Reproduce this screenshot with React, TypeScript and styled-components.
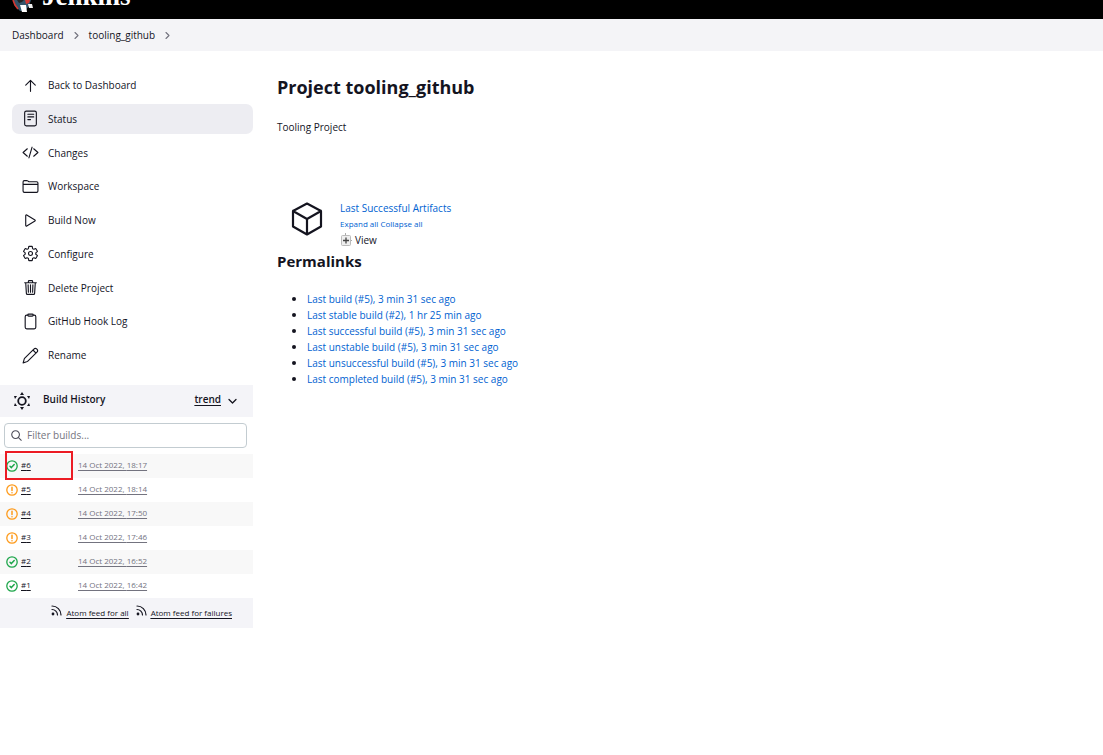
import React from 'react';
import styled, { createGlobalStyle, css } from 'styled-components';

const GlobalStyle = createGlobalStyle`
  * { box-sizing: border-box; }
  body {
    margin: 0;
    background: #fff;
    color: #14141f;
    font: 10px/16px "Open Sans", "Noto Sans", sans-serif;
  }
  a { color: inherit; }
  svg { display: block; flex: none; }
`;

const TopBar = styled.header`
  height: 19px;
  background: #000;
  overflow: hidden;
  display: flex;
  align-items: flex-end;
  padding-left: 11px;
`;

const Brand = styled.a`
  display: flex;
  align-items: flex-end;
  gap: 7px;
  color: #fff;
  text-decoration: none;
`;

const Wordmark = styled.span`
  font: bold 27px/28px "Liberation Serif", serif;
  margin-bottom: 9px;
`;

const Breadcrumbs = styled.nav`
  display: flex;
  align-items: center;
  gap: 8px;
  height: 32px;
  padding: 0 12px;
  background: #f4f4f7;
`;

const Crumb = styled.a`
  text-decoration: none;
`;

const Page = styled.div`
  display: grid;
  grid-template-columns: 253px minmax(0, 1fr);
  column-gap: 24px;
`;

const Side = styled.aside``;

const Tasks = styled.nav`
  display: flex;
  flex-direction: column;
  justify-content: space-between;
  min-height: 334px;
  padding: 19px 0 15px 12px;
`;

const Task = styled.a<{ $active?: boolean }>`
  display: flex;
  align-items: center;
  gap: 9px;
  height: 30px;
  padding: 0 10px;
  border-radius: 7px;
  text-decoration: none;
  background: ${(p) => (p.$active ? '#ededf2' : 'transparent')};
`;

const HistoryHead = styled.div`
  display: flex;
  align-items: center;
  height: 32px;
  padding: 0 16px 0 13px;
  background: #f4f4f8;
`;

const HistoryTitle = styled.h2`
  flex: 1;
  margin: 0 0 4px 12px;
  font-size: 10px;
  line-height: 16px;
  font-weight: 600;
`;

const Trend = styled.a`
  margin: 0 7px 4px 0;
  font-weight: 600;
  text-underline-offset: 2px;
`;

const Filter = styled.label`
  display: flex;
  align-items: center;
  gap: 5px;
  height: 25px;
  margin: 6px 6px 6px 4px;
  padding: 0 6px 1px;
  border: 1px solid #c3ccd1;
  border-radius: 4px;
`;

const FilterInput = styled.input`
  flex: 1;
  min-width: 0;
  border: 0;
  padding: 0;
  outline: 0;
  background: none;
  font: inherit;
  &::placeholder { color: #757580; opacity: 1; }
`;

const Builds = styled.table`
  width: 100%;
  border-collapse: collapse;
`;

const BuildRow = styled.tr`
  height: 24px;
  &:nth-child(odd) { background: #f8f8f8; }
`;

const NumberCell = styled.td`
  position: relative;
  width: 78px;
  padding: 0 0 0 6px;
`;

const Marker = styled.span`
  position: absolute;
  top: -3px;
  left: 5px;
  width: 68px;
  height: 29px;
  border: 2px solid #ec1c24;
`;

const BuildName = styled.span`
  display: flex;
  align-items: center;
  gap: 3px;
`;

const BuildLink = styled.a<{ $muted?: boolean }>`
  display: inline-block;
  padding-bottom: 2px;
  font-size: 8px;
  line-height: 14px;
  text-underline-offset: 2px;
  ${(p) => p.$muted && css`color: #73737f;`}
`;

const DateCell = styled.td`
  padding: 0 0 2px;
  line-height: 14px;
`;

const Feeds = styled.div`
  display: flex;
  justify-content: flex-end;
  align-items: center;
  gap: 7px;
  height: 30px;
  padding-right: 21px;
  background: #f4f4f8;
  font-size: 8px;
`;

const Feed = styled.a`
  display: flex;
  gap: 4px;
  text-underline-offset: 2px;
`;

const FeedText = styled.span`
  text-decoration: underline;
`;

const Main = styled.main`
  padding-top: 23px;
`;

const Title = styled.h1`
  margin: 0;
  font-size: 18px;
  line-height: 26px;
  font-weight: 700;
`;

const Description = styled.p`
  margin: 19px 0 65px;
`;

const Artifacts = styled.section`
  display: flex;
  align-items: flex-end;
  gap: 16px;
  padding-left: 14px;
`;

const Cube = styled.svg`
  align-self: center;
  margin-top: -10px;
`;

const ArtifactList = styled.div`
  display: flex;
  flex-direction: column;
`;

const BlueLink = styled.a`
  color: #0062d1;
  text-decoration: none;
`;

const TreeActions = styled.div`
  font-size: 8px;
`;

const TreeNode = styled.div`
  display: flex;
  align-items: center;
  gap: 3px;
`;

const Section = styled.h2`
  margin: 1px 0 18px;
  font-size: 15px;
  line-height: 24px;
  font-weight: 700;
`;

const Permalinks = styled.ul`
  margin: 0;
  padding-left: 30px;
  & > li::marker { font-size: 12px; }
`;

const stroke = { fill: 'none', stroke: '#14141f', strokeLinecap: 'round', strokeLinejoin: 'round' } as const;

const TaskIcon = ({ children }: { children: React.ReactNode }) => (
  <svg width="17" height="17" viewBox="0 0 512 512" {...stroke} strokeWidth="34" aria-hidden="true">{children}</svg>
);

const tasks: { label: string; active?: boolean; icon: React.ReactNode }[] = [
  { label: 'Back to Dashboard', icon: <path d="M112 244 256 100 400 244M256 120v312" /> },
  {
    label: 'Status', active: true,
    icon: <><rect x="80" y="32" width="352" height="448" rx="48" /><path d="M176 128h176M176 208h176M176 288h80" /></>,
  },
  { label: 'Changes', icon: <path d="M160 368 32 256l128-112M352 368l128-112-128-112M304 96l-96 320" /> },
  {
    label: 'Workspace',
    icon: <path d="M440 432H72a40 40 0 0 1-40-40V120a40 40 0 0 1 40-40h75.900a40 40 0 0 1 22.200 6.700l27.800 18.600a40 40 0 0 0 22.200 6.700H440a40 40 0 0 1 40 40v240a40 40 0 0 1-40 40zM32 192h448" />,
  },
  { label: 'Build Now', icon: <path d="M112 111v290c0 17.400 17 28.500 31 20.200l247-148.400c12.300-7.800 12.300-25.800 0-33.600L143 90.800c-14-8.300-31 2.800-31 20.200z" /> },
  {
    label: 'Configure',
    icon: <><circle cx="256" cy="256" r="60" /><path d="M416.390 256a154.340 154.340 0 0 1-1.530 20.790l45.210 35.460a10.810 10.810 0 0 1 2.450 13.750l-42.770 74a10.810 10.810 0 0 1-13.140 4.590l-44.900-18.080a16.110 16.110 0 0 0-15.170 1.750A164.480 164.480 0 0 1 325 400.800a15.940 15.940 0 0 0-8.820 12.140l-6.730 47.890a11.080 11.080 0 0 1-10.680 9.170h-85.540a11.110 11.110 0 0 1-10.690-8.870l-6.720-47.820a16.070 16.070 0 0 0-9-12.220 155.300 155.300 0 0 1-21.460-12.570 16 16 0 0 0-15.110-1.710l-44.890 18.070a10.810 10.810 0 0 1-13.140-4.580l-42.770-74a10.800 10.800 0 0 1 2.450-13.750l38.210-30a16.050 16.050 0 0 0 6-14.080c-.36-4.170-.58-8.330-.58-12.500s.21-8.270.58-12.350a16 16 0 0 0-6.070-13.940l-38.190-30A10.810 10.810 0 0 1 49.480 186l42.770-74a10.810 10.810 0 0 1 13.140-4.590l44.900 18.080a16.110 16.110 0 0 0 15.170-1.750A164.480 164.480 0 0 1 187 111.200a15.940 15.940 0 0 0 8.820-12.140l6.730-47.890A11.080 11.080 0 0 1 213.230 42h85.540a11.110 11.110 0 0 1 10.690 8.870l6.720 47.820a16.070 16.070 0 0 0 9 12.220 155.300 155.300 0 0 1 21.460 12.570 16 16 0 0 0 15.110 1.710l44.890-18.070a10.810 10.810 0 0 1 13.140 4.580l42.770 74a10.800 10.800 0 0 1-2.450 13.750l-38.210 30a16.050 16.050 0 0 0-6.050 14.080c.33 4.140.55 8.300.55 12.470z" /></>,
  },
  {
    label: 'Delete Project',
    icon: <path d="M112 112l20 320c1 18.500 14.400 32 32 32h184c17.700 0 30.900-13.500 32-32l20-320M80 112h352M192 112V72a24 24 0 0 1 24-24h80a24 24 0 0 1 24 24v40M256 176v224M184 176l8 224M328 176l-8 224" />,
  },
  {
    label: 'GitHub Hook Log',
    icon: <><path d="M336 64h32a48 48 0 0 1 48 48v320a48 48 0 0 1-48 48H144a48 48 0 0 1-48-48V112a48 48 0 0 1 48-48h32" /><rect x="176" y="32" width="160" height="64" rx="26" /></>,
  },
  { label: 'Rename', icon: <path d="M358 62 84 336c-12 12-20 34-26 58L34 478l84-24c24-6 46-14 58-26L450 154c22-22 28-56 4-84l-12-12c-28-24-62-18-84 4zM330 90l92 92" /> },
];

const Chevron = ({ down }: { down?: boolean }) => (
  <svg width="9" height="9" viewBox="0 0 9 9" {...stroke} stroke={down ? '#14141f' : '#73737f'} strokeWidth={down ? 1.3 : 1.1} aria-hidden="true">
    <path d={down ? 'M1 2.500l3.500 3.500L8 2.500' : 'M3 1.500l3 3L3 7.500'} />
  </svg>
);

const BuildIcon = ({ ok }: { ok: boolean }) => (
  <svg width="12" height="12" viewBox="0 0 12 12" fill="none" strokeLinecap="round" strokeLinejoin="round"
    stroke={ok ? '#1ea64b' : '#fe9a1a'} strokeWidth="1.300" role="img" aria-label={ok ? 'Success' : 'Unstable'}>
    <circle cx="6" cy="6" r="5.200" />
    {ok ? <path d="M4 6.200l1.400 1.400L8.200 4.600" strokeWidth="1.500" /> : <path d="M6 3.200v3.400M6 8.700v.1" strokeWidth="1.500" />}
  </svg>
);

const FeedIcon = () => (
  <svg width="11" height="11" viewBox="0 0 11 11" {...stroke} strokeWidth="1.200" aria-hidden="true">
    <path d="M1 1c5 0 9 4 9 9M1 4.500c3 0 5.500 2.500 5.500 5.500" />
    <circle cx="2" cy="9" r=".8" fill="#14141f" />
  </svg>
);

const builds = [
  { id: 6, time: '18:17', ok: true, marked: true },
  { id: 5, time: '18:14', ok: false },
  { id: 4, time: '17:50', ok: false },
  { id: 3, time: '17:46', ok: false },
  { id: 2, time: '16:52', ok: true },
  { id: 1, time: '16:42', ok: true },
];

const permalinks = [
  'Last build (#5), 3 min 31 sec ago',
  'Last stable build (#2), 1 hr 25 min ago',
  'Last successful build (#5), 3 min 31 sec ago',
  'Last unstable build (#5), 3 min 31 sec ago',
  'Last unsuccessful build (#5), 3 min 31 sec ago',
  'Last completed build (#5), 3 min 31 sec ago',
];

export default function App() {
  return (
    <>
      <GlobalStyle />
      <TopBar>
        <Brand href="#">
          <svg width="24" height="19" viewBox="0 0 24 19" aria-hidden="true">
            <path d="M2 0h18l-2 6-4 5H9L4 6z" fill="#33546a" />
            <path d="M2 0l2 5 3 4" stroke="#d33833" strokeWidth="1.600" fill="none" />
            <path d="M14 0h5l-1 3-3 1z" fill="#d33833" />
            <path d="M6 0h7l-2 2-3 1z" fill="#222" />
            <path d="M9 5h6l1 7h-5z" fill="#fff" />
            <path d="M17 4l4 0 1 4-4 0z" fill="#eee" />
          </svg>
          <Wordmark>Jenkins</Wordmark>
        </Brand>
      </TopBar>
      <Breadcrumbs aria-label="Breadcrumb">
        <Crumb href="#">Dashboard</Crumb>
        <Chevron />
        <Crumb href="#">tooling_github</Crumb>
        <Chevron />
      </Breadcrumbs>
      <Page>
        <Side>
          <Tasks>
            {tasks.map((t) => (
              <Task href="#" key={t.label} $active={t.active}>
                <TaskIcon>{t.icon}</TaskIcon>
                {t.label}
              </Task>
            ))}
          </Tasks>
          <HistoryHead>
            <svg width="18" height="18" viewBox="0 0 18 18" aria-hidden="true">
              <circle cx="9" cy="9" r="3.800" fill="none" stroke="#14141f" strokeWidth="1.800" />
              <path d="M9 0l2 3H7zM9 18l2-3H7zM1 4l3 0-2 3zM1 14l3 0-2-3zM17 4l-3 0 2 3zM17 14l-3 0 2-3z" fill="#14141f" />
            </svg>
            <HistoryTitle>Build History</HistoryTitle>
            <Trend href="#">trend</Trend>
            <Chevron down />
          </HistoryHead>
          <Filter>
            <svg width="11" height="11" viewBox="0 0 12 12" {...stroke} stroke="#4d4d59" strokeWidth="1.200" aria-hidden="true">
              <circle cx="5" cy="5" r="4.200" /><path d="M8.200 8.200l3 3" />
            </svg>
            <FilterInput placeholder="Filter builds..." aria-label="Filter builds" />
          </Filter>
          <Builds>
            <tbody>
              {builds.map((b) => (
                <BuildRow key={b.id}>
                  <NumberCell>
                    <BuildName>
                      <BuildIcon ok={b.ok} />
                      <BuildLink href="#">#{b.id}</BuildLink>
                    </BuildName>
                    {b.marked && <Marker />}
                  </NumberCell>
                  <DateCell><BuildLink href="#" $muted>14 Oct 2022, {b.time}</BuildLink></DateCell>
                </BuildRow>
              ))}
            </tbody>
          </Builds>
          <Feeds>
            <Feed href="#"><FeedIcon /><FeedText>Atom feed for all</FeedText></Feed>
            <Feed href="#"><FeedIcon /><FeedText>Atom feed for failures</FeedText></Feed>
          </Feeds>
        </Side>
        <Main>
          <Title>Project tooling_github</Title>
          <Description>Tooling Project</Description>
          <Artifacts>
            <Cube width="33" height="36" viewBox="0 0 33 36" {...stroke} strokeWidth="2.200" aria-hidden="true">
              <path d="M16 2.500 30 10v15.500L16 33.500 2 25.500V10zM2 10l14 8 14-8M16 18v15" />
            </Cube>
            <ArtifactList>
              <BlueLink href="#">Last Successful Artifacts</BlueLink>
              <TreeActions><BlueLink href="#">Expand all</BlueLink> <BlueLink href="#">Collapse all</BlueLink></TreeActions>
              <TreeNode>
                <svg width="12" height="14" viewBox="0 0 12 14" aria-hidden="true">
                  <path d="M5.500 0v3M11 7.500h1" stroke="#aaa" />
                  <rect x="1.500" y="2.500" width="9" height="10" rx="1" fill="#eee" stroke="#bbb" />
                  <path d="M3 7.500h6M6 4.500v6" stroke="#444" strokeWidth="1.300" />
                </svg>
                View
              </TreeNode>
            </ArtifactList>
          </Artifacts>
          <Section>Permalinks</Section>
          <Permalinks>
            {permalinks.map((p) => <li key={p}><BlueLink href="#">{p}</BlueLink></li>)}
          </Permalinks>
        </Main>
      </Page>
    </>
  );
}
